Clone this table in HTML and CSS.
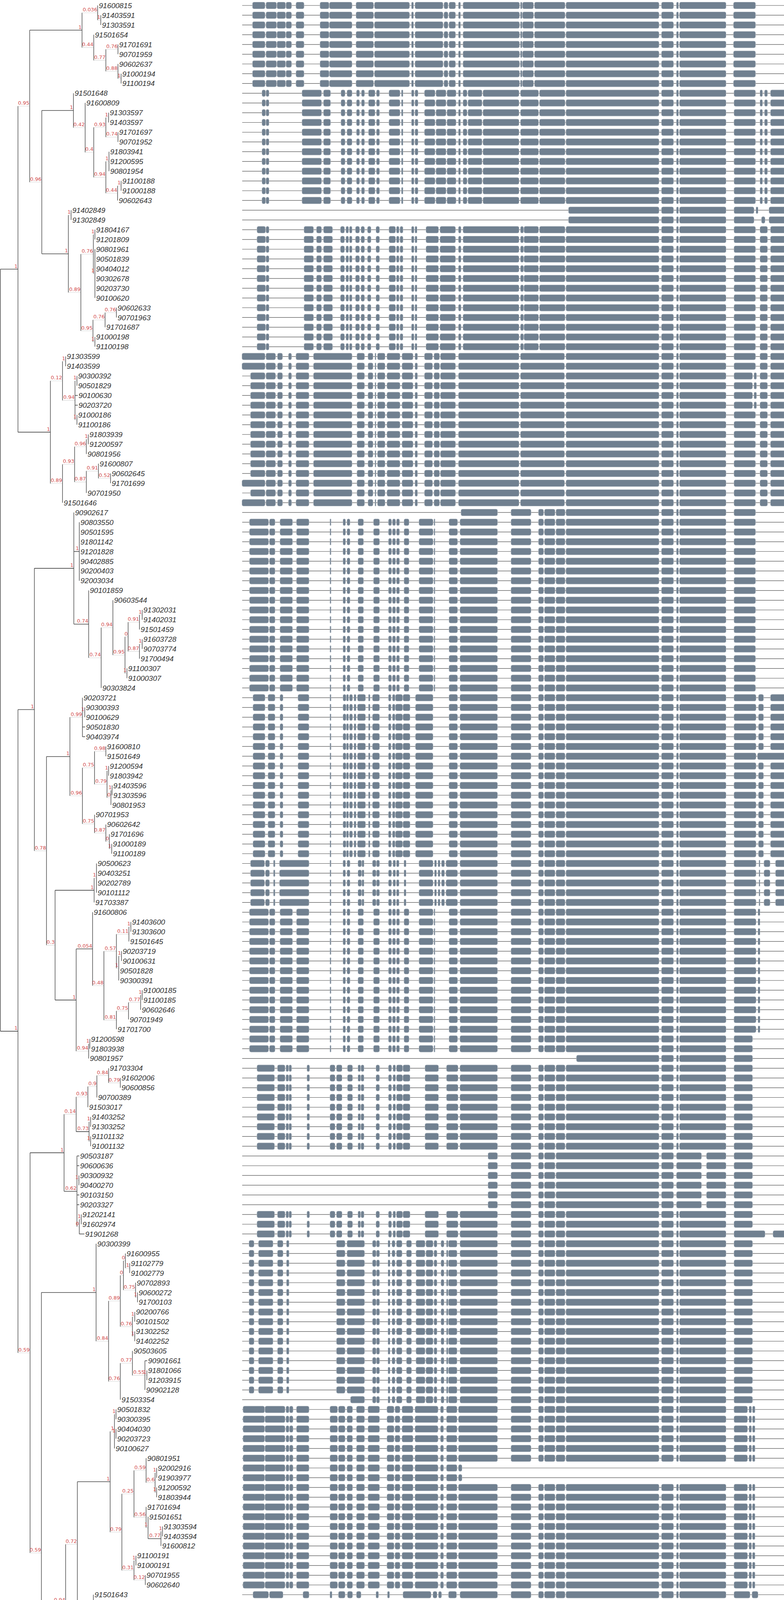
FILE: index.html
```html
<!DOCTYPE html>
<html>
<head>
<meta charset="utf-8">
<title>Gene tree with exon structures</title>
<link rel="stylesheet" href="styles.css">
</head>
<body>
<div class="figure" id="figure"></div>
<script src="script.js"></script>
</body>
</html>
```

FILE: styles.css
```css
html, body {
  margin: 0;
  padding: 0;
  background: #ffffff;
}
.figure {
  width: 2007px;
  height: 7583px;
  overflow: hidden;
  background: #ffffff;
}
.figure svg {
  display: block;
}
.vt {
  stroke: #333333;
  stroke-width: 1.3;
}
.hz {
  stroke: #454545;
  stroke-width: 1.6;
}
.dot {
  stroke: #9c9c9c;
  stroke-width: 1.1;
  stroke-dasharray: 1.2 1.8;
}
.leaf {
  font-family: "Liberation Sans", Arial, sans-serif;
  font-style: italic;
  font-size: 19px;
  fill: #333333;
}
.sup {
  font-family: "DejaVu Sans", sans-serif;
  font-size: 13px;
  fill: #d24c4c;
}
.intron {
  stroke: #505050;
  stroke-width: 1.2;
}
.exon {
  fill: #708090;
  stroke: #aab3bc;
  stroke-width: 1;
}
.scale-line {
  stroke: #222222;
  stroke-width: 1.5;
}
.scale-label {
  font-family: "DejaVu Sans", sans-serif;
  font-size: 16px;
  fill: #222222;
}
```

FILE: script.js
```javascript
(function () {
  var LABELS = ("91600815 91403591 91303591 91501654 91701691 90701959 90602637 91000194 91100194 91501648 " +
    "91600809 91303597 91403597 91701697 90701952 91803941 91200595 90801954 91100188 91000188 " +
    "90602643 91402849 91302849 91804167 91201809 90801961 90501839 90404012 90302678 90203730 " +
    "90100620 90602633 90701963 91701687 91000198 91100198 91303599 91403599 90300392 90501829 " +
    "90100630 90203720 91000186 91100186 91803939 91200597 90801956 91600807 90602645 91701699 " +
    "90701950 91501646 90902617 90803550 90501595 91801142 91201828 90402885 90200403 92003034 " +
    "90101859 90603544 91302031 91402031 91501459 91603728 90703774 91700494 91100307 91000307 " +
    "90303824 90203721 90300393 90100629 90501830 90403974 91600810 91501649 91200594 91803942 " +
    "91403596 91303596 90801953 90701953 90602642 91701696 91000189 91100189 90500623 90403251 " +
    "90202789 90101112 91703387 91600806 91403600 91303600 91501645 90203719 90100631 90501828 " +
    "90300391 91000185 91100185 90602646 90701949 91701700 91200598 91803938 90801957 91703304 " +
    "91602006 90600856 90700389 91503017 91403252 91303252 91101132 91001132 90503187 90600636 " +
    "90300932 90400270 90103150 90203327 91202141 91602974 91901268 90300399 91600955 91102779 " +
    "91002779 90702893 90600272 91700103 90200766 90101502 91302252 91402252 90503605 90901661 " +
    "91801066 91203915 90902128 91503354 90501832 90300395 90404030 90203723 90100627 90801951 " +
    "92002916 91903977 91200592 91803944 91701694 91501651 91303594 91403594 91600812 91100191 " +
    "91000191 90701955 90602640 91501643 91803936 91200600 90902693 90801949 91000183 91100183 " +
    "91600804 90701947 90602648 91701702 91303429 91403429 91501873 91003169 91103169 91800472 " +
    "90802860 91203011 90901852 91901423 90502051 90201098 90103665 90402434 90301205 92000647 " +
    "91901422 90901853 90602106 90702224 91701509 91602746 90800013 90700372 90702771 90701954 " +
    "91600811 91303595 91403595 91701695 91000190 91100190 90602641 90203722 90100628 90501831 " +
    "90300394 91501650 91200593 91803943 90801952 90102578 90403435 90202106 90300054 90502650 " +
    "90800506 91204000 91800623 91702745 90601418 90700953 91602995 91102901 91002901 91502474 " +
    "91400375 91300375 90300396 90501833 90203724 90100626 91701693 90801960 91200591 91803945 " +
    "90902750 92003902 90602639 90701956 91501652 91600813 91403593 91303593 91000192 91100192 " +
    "91100193 91000193 90602638 91701692 90701957 91303592 91403592 91600814 91501653 90801959 " +
    "91200590 90902751 91803946 90404007 90501834 90203725 90100625 90300397 91703355 90400422 " +
    "90203266 90103094 90902272 91901736 92004146 91202832 91802864 90903590 90700369 90600608 " +
    "91700328 90703931 91603879 90600793 90600142 90702770 91002922 91102922 91303335 91403335 " +
    "91500036 91803843 91202718 91701862 90300575 90500052 90104256 90402933 90701789 90602810 " +
    "91601140").split(" ");

  var ROW0 = 14, ROWH = 24.96;
  function rowY(k) { return ROW0 + k * ROWH; }

  var N210 = "((0,(1,2)1@258)0.036@250,(3,((4,5)0.76@302,(6,(7,8)1@310)0.88@302)0.77@271)0.44@240)1@210";
  var N188 = "(9,(10,(((11,12)1@278,(13,14)0.74@302)0.93@271,((15-17)1@279,((18,19)1@310,20)0.44@301)0.94@271)0.4@240)0.42@218)1@188";
  var N175 = "((21,22)1@182,(((23,24)1@243,(25-30)1@243)0.76@239,(((31,32)0.76@298,33)0.76@269,(34,35)1@243)0.95@238)0.89@207)1@175";
  var N096 = "(" + N188 + "," + N175 + ")0.96@107";
  var P095 = "(" + N210 + "," + N096 + ")0.95@76";
  var N012 = "((36,37)1@168,((38,39)1@197,40>201,41>201,(42,43)1@197)0.94@192)0.12@160";
  var N089 = "((((44,45)1@226,46)0.96@221,((47,(48,49)0.52@283)0.91@252,50)0.87@221)0.93@191,51)0.89@160";
  var N129 = "(" + N012 + "," + N089 + ")1@129";
  var R1 = "(" + P095 + "," + N129 + ")1@46";

  var N189 = "(52,(53-59)1@203,(60,((61,((((62,63)1@364,64)0.91@357,((65,66)1@364,67)0.87@357)0@328,(68,69)1@325)0.95@320)0.94@289,70)0.74@259)0.74@227)1@189";
  var N179 = "((71,(72,73)1@217,74>220,75>220)0.99@211,(((76,77)0.98@271,((78,79)1@278,((80,81)1@287,82)0@284)0.79@274)0.75@242,(83,(84,(85,(86,87)1@286)0@280)0.87@271)0.75@242)0.96@211)1@179";
  var N195 = "((93,((((94,95)1@335,96)0.11@330,((97,98)1@311,99,100)1@304)0.57@298,((((101,102)1@364,103)0.77@360,104)0.75@329,105)0.81@298)0.48@266)0.054@237,((106,107)1@230,108)0.94@227)1@195";
  var N030 = "(((88-91)1@247,92)1@241," + N195 + ")0.3@141";
  var N078 = "(" + N179 + "," + N030 + ")0.78@119";
  var N088 = "(" + N189 + "," + N078 + ")1@88";

  var N014 = "((((109,(110,111)0.79@308)0.84@278,112)0.9@248,113)0.93@225,((114,115)1@232,(116,117)1@232)0.73@228)0.14@195";
  var N062 = "(118>205,119>205,(120,121)1@202,122>205,123>205,((124,125)1@208,126>218)0@203)0.62@197";
  var N164 = "(" + N014 + "," + N062 + ")1@164";
  var N246 = "(127,((((128,(129,130)1@332)0@321,(131,(132,133)1@352)0.75@347)0@316,((134,135)1@345,(136,137)1@345)0.76@339)0.89@308,((138,(139>379,(140,141)1@376,142)0.55@371)0.77@339,143)0.76@308)0.84@278)1@246";
  var N079 = "(((149,((150,151)1@401,(152,153)1@401)0.6@397)0.59@374,(154,(155,((156,157)1@416,158)0.77@412)1@379)0.56@374)0.25@343,((159,160)1@348,(161,162)0.12@372)0.31@343)0.79@312";
  var N1_282 = "(((144,145)1@297,(146,147)1@297,148)1@293," + N079 + ")1@282";
  var N1_239 = "(163,(164,(165,166)1@254,167)1@250)1@239";
  var N072 = "(" + N1_282 + "," + N1_239 + ")0.72@198";
  var N1_221 = "((168,169)1@226,(170,((171,172)0.85@291,173)0@260)0.73@252)1@221";
  var N094b = "(" + N072 + "," + N1_221 + ")0.94@168";
  var N074 = "((174,175)1@320,(176,(177,178)1@350)0.73@346)0.74@315";
  var N082 = "((((179>371,(180,181)1@368,((182,183)1@407,184,185,(186,187)1@407,188)0.086@404)0.92@362,(189,(190,191)1@374,(192,193)1@374)0.62@362)0@330,194)0@320,195)0.82@315";
  var N1_283 = "(" + N074 + "," + N082 + ")1@283";

  var N074b = "(((199,200>503,(201,202)1@500)0.94@495,(203,((204,205)1@530,206)0.86@525)0.98@495)0.62@465,((207-210)1@470,211>475)0.78@465)0.74@435";
  var N099b = "((212,213)0.88@465,214)0.99@435";
  var N1_404 = "(" + N074b + "," + N099b + ")1@404";
  var N077 = "((223,(224,(225,226)0@525)0.88@518)0.77@488,((227,228)1@494,(229,(230,231)1@525)0.79@518)0.89@488)0.77@458";
  var N07 = "((218,(219,220)1@463,221>467,222>467)0.96@459," + N077 + ")0.7@429";
  var N1_406 = "((215,(216,217)1@440)0.73@435," + N07 + ")1@406";
  var N094c = "(" + N1_404 + "," + N1_406 + ")0.94@365";
  var N08 = "((236,(237>456,((238,239)1@490,240>494,241)0.85@485)1@450)0.049@445,((242,(243,(244,(245,(246,247)1@520)0.74@515)1@480)0.87@474)0.99@443,(248,249)1@418)1@410)0.8@407";
  var N1_383 = "(((232,233)1@420,(234,235)0.87@443)0.95@414," + N08 + ")1@383";
  var N082b = "((250,251)1@413,((252>495,253)0.86@470,(254,((255,256)1@505,257>509,258)0.92@499)0.74@469)0.74@438)0.82@408";
  var N077b = "(259>419,(260,261)1@416,262,(263,(264-267)1@445)0.99@438)0.77@408";
  var N1_378 = "(" + N082b + "," + N077b + ")1@378";
  var N1_351 = "(" + N1_383 + "," + N1_378 + ")1@351";
  var N03 = "(" + N094c + "," + N1_351 + ")0.3@334";
  var N1_411 = "(268>413,(269-271)1@416)1@411";
  var N076 = "(" + N03 + "," + N1_411 + ")0.76@312";
  var N087 = "(198>316," + N076 + ")0.87@282";
  var N09 = "(" + N087 + ",272>289)0.9@251";
  var N1_244 = "(((273-277)1@282,278>302)0.99@275,(279,((280,(281,282)0.26@367)0.88@336,(283>322,((284>374,285>379)1@362,(((286,287)1@396,((288,289)1@430,290)0.61@422)0.93@392,((291,292)1@396,((293,(294,295)1@437)0.91@431,(((296>512,297)0.012@500,298)0.74@461,(299,300)0.78@462)0.43@431)0@398)0.69@392)1@362)0.92@346)1@315)0.83@306)0.99@275)1@244";
  var N099 = "(" + N09 + "," + N1_244 + ")0.99@228";
  var N085 = "((196>250,197>274)1@236," + N099 + ")0.85@198";
  var N054 = "(" + N1_283 + "," + N085 + ")0.54@166";
  var N091 = "(" + N094b + "," + N054 + ")0.91@137";
  var N0591 = "(" + N246 + "," + N091 + ")0.59@106";
  var N059 = "(" + N164 + "," + N0591 + ")0.59@77";
  var R2 = "(" + N088 + "," + N059 + ")1@46";

  var TREE = "(" + R1 + "," + R2 + ")@0";

  function parseTree(s) {
    var i = 0;
    function num() {
      var t = "";
      while (i < s.length && /[0-9.]/.test(s[i])) t += s[i++];
      return parseFloat(t);
    }
    function item() {
      if (s[i] === "(") {
        i++;
        var ch = [];
        while (true) {
          var got = item();
          for (var g = 0; g < got.length; g++) ch.push(got[g]);
          if (s[i] === ",") { i++; continue; }
          if (s[i] === ")") { i++; break; }
          throw new Error("bad tree at " + i);
        }
        var sup = "";
        while (s[i] !== "@") sup += s[i++];
        i++;
        var x = num();
        return [{ ch: ch, sup: sup, x: x }];
      }
      var a = num(), b = a, lx = null;
      if (s[i] === "-") { i++; b = num(); }
      if (s[i] === ">") { i++; lx = num(); }
      var out = [];
      for (var k = a; k <= b; k++) out.push({ leaf: k, lx: lx });
      return out;
    }
    return item()[0];
  }

  function layout(n) {
    if (n.leaf !== undefined) { n.y = rowY(n.leaf); return; }
    for (var c = 0; c < n.ch.length; c++) layout(n.ch[c]);
    n.y = (n.ch[0].y + n.ch[n.ch.length - 1].y) / 2;
  }

  var canvas = document.createElement("canvas");
  var ctx = canvas.getContext("2d");
  ctx.font = '13px "DejaVu Sans", sans-serif';
  function supW(t) { return ctx.measureText(t).width; }

  var lines = [], texts = [];
  function f(v) { return Math.round(v * 100) / 100; }
  function line(cls, x1, y1, x2, y2) {
    lines.push('<line class="' + cls + '" x1="' + f(x1) + '" y1="' + f(y1) + '" x2="' + f(x2) + '" y2="' + f(y2) + '"/>');
  }

  function draw(n) {
    if (n.leaf !== undefined) return;
    var nx = n.x === 0 ? 1 : n.x;
    var first = n.ch[0], last = n.ch[n.ch.length - 1];
    line("vt", nx, first.y, nx, last.y);
    for (var c = 0; c < n.ch.length; c++) {
      var ch = n.ch[c];
      if (ch.leaf !== undefined) {
        var lx = ch.lx !== null ? ch.lx : nx + 3;
        if (lx - nx > 6) line("hz", nx, ch.y, lx - 2, ch.y);
        texts.push('<text class="leaf" x="' + f(lx) + '" y="' + f(ch.y + 6.8) + '">' + LABELS[ch.leaf] + '</text>');
      } else {
        var L = ch.x - nx;
        var w = ch.sup ? supW(ch.sup) : 0;
        if (L > w + 4) {
          line("hz", nx, ch.y, ch.x, ch.y);
        } else {
          line("dot", nx, ch.y, ch.x, ch.y);
        }
        if (ch.sup) {
          texts.push('<text class="sup" x="' + f(ch.x - 1) + '" y="' + f(ch.y - 3.5) + '" text-anchor="end">' + ch.sup + '</text>');
        }
        draw(ch);
      }
    }
  }

  var root = parseTree(TREE.replace(/\s+/g, ""));
  layout(root);
  draw(root);

  var SC = 2007 / 1568;
  var M = "1132-1318 1323-1347 1353-1357 1359-1452";
  var EM = "920-995 1022-1062 1077-1087 1089-1110 1112-1130";
  var PAT = {
    A: "505-530 532-553 554-571 572-583 592-608 640-658 659-704 712-747 749-819 823-827 830-886 888-896 898-911 917-921 926-1039 1041-1044 1045-1067 1069-1130 " + M + " 1467-1511",
    B: "524-531 532-538 604-643 647-661 682-690 694-704 713-719 723-729 737-750 753-759 778-800 803-806 823-828 830-836 849-870 872-892 894-912 917-921 926-934 936-964 966-1038 1041-1077 1079-1130 " + M + " 1468-1511 1520-1525 1529-1535 1541-1575",
    C: "514-531 532-538 608-627 633-643 647-665 681-689 692-697 699-704 711-719 722-729 735-742 752-759 778-791 793-798 800-806 823-828 830-834 852-877 880-911 917-922 926-1038 1041-1047 1048-1077 1079-1130 " + M + " 1468-1511 1520-1535 1541-1575",
    D1: "484-530 532-551 555-565 577-583 592-618 627-704 714-729 736-746 750-752 755-770 774-800 804-826 830-835 849-865 868-879 881-911 917-1038 1041-1129 " + M + " 1468-1511 1520-1535 1541-1575",
    D2: "501-530 532-551 555-565 577-583 592-618 627-704 714-729 736-746 750-752 755-770 774-800 804-826 830-835 849-865 868-879 881-911 917-1038 1041-1129 " + M + " 1468-1511 1520-1535 1541-1575",
    E: "499-537 539-550 560-585 593-618 660-662 686-691 694-700 716-727 747-759 777-783 785-791 793-799 808-818 838-866 868-870 898-915 " + EM + " " + M + " 1468-1511",
    F: "506-530 536-550 560-566 596-618 660-662 686-692 693-697 699-705 708-712 715-731 737-740 745-759 777-782 785-790 791-805 806-820 831-866 898-915 " + EM + " " + M + " 1468-1512 1517-1527 1541-1575",
    G: "501-529 531-539 547-550 559-618 660-662 686-691 694-700 716-723 724-728 745-752 753-759 777-783 786-791 793-798 808-812 838-866 869-873 876-880 883-889 892-915 " + EM + " " + M + " 1468-1512 1518-1520 1528-1540 1551-1575",
    I: "514-549 555-570 572-577 578-583 614-619 660-670 673-684 695-705 716-721 722-728 752-759 777-783 786-791 793-805 806-820 850-877 893-916 " + EM + " " + M + " 1468-1505",
    Q: "976-995 1022-1062 1077-1087 1089-1110 1112-1318 1323-1347 1353-1403 1413-1452 1468-1505",
    J: "498-508 517-546 555-566 573-578 673-690 694-729 745-752 753-759 776-780 784-790 793-804 813-823 832-850 852-866 868-874 882-888 893-896 897-914 " + EM + " " + M + " 1468-1505",
    K: "486-529 530-570 572-578 579-586 593-618 660-675 677-690 694-705 713-729 736-759 774-788 790-800 804-826 830-876 881-887 893-914 917-995 1022-1062 1077-1087 1089-1110 1112-1130 " + M + " 1468-1495 1498-1503 1505-1510",
    L: "506-537 539-566 606-618 660-664 677-690 695-705 713-722 752-757 775-779 806-862 866-874 877-883 897-913 " + EM + " " + M + " 1468-1500 1504-1516",
    Mx: "506-540 554-573 576-588 607-613 660-666 667-672 690-700 715-720 721-727 752-757 758-763 777-782 783-789 816-872 894-916 " + EM + " " + M + " 1468-1512 1520-1523",
    N: "506-541 557-570 577-585 607-611 654-669 682-686 694-704 707-730 737-741 752-759 778-787 816-876 900-912 915-995 1022-1062 1077-1087 1089-1110 1112-1130 " + M + " 1468-1497",
    O: "505-540 554-573 575-588 607-613 660-672 689-700 713-720 721-727 752-757 758-763 775-781 782-789 816-872 895-916 " + EM + " " + M + " 1468-1495 1497-1512 1520-1527 1538-1575",
    P: "505-541 545-550 561-569 571-580 601-610 612-619 660-668 672-684 694-701 713-720 721-727 749-759 776-779 800-805 807-820 825-866 869-876 879-887 890-896 898-916 " + EM + " " + M + " 1468-1510 1546-1575",
    S197: "510-541 545-549 560-566 570-578 601-618 660-666 680-686 695-705 713-721 737-740 752-759 777-780 781-790 791-797 800-810 830-864 866-876 893-912 915-995 1022-1062 1077-1087 1089-1110 1112-1130 " + M + " 1468-1530 1545-1575",
    S278: "1166-1190 1194-1318 1323-1347 1353-1357 1359-1452 1468-1512 1522-1533 1538-1575"
  };
  var T_Ob = "1468-1505 1507-1512 1520-1523 1538-1547";
  var T_O2 = "1468-1512 1519-1524 1526-1533 1537-1552 1554-1575";
  var T3 = "1468-1504 1507-1512 1520-1533 1538-1575";

  var ROWS = [
    [0, 8, "A"], [9, 20, "B"],
    [21, 21, "B", { from: 1137, tail: "1468-1508 1512-1516 1538-1575" }],
    [22, 22, "B", { from: 1137, tail: "1468-1508 1523-1530 1538-1575" }],
    [23, 35, "C"], [36, 37, "D1"],
    [38, 41, "D2", { tail: "1468-1505 1508-1513 1520-1535 1541-1575" }],
    [42, 48, "D2"], [49, 49, "D1"], [50, 50, "D2"], [51, 51, "D1"],
    [52, 52, "E", { from: 922 }], [53, 70, "E"],
    [71, 76, "F"], [77, 77, "F", { tail: "1468-1512 1515-1575" }], [78, 87, "F"],
    [88, 92, "G"],
    [93, 105, "E", { tail: "1468-1512 1516-1520" }],
    [106, 107, "E", { tail: "1468-1505" }],
    [108, 108, "E", { from: 1153, tail: "1468-1505" }],
    [109, 117, "I"], [118, 123, "Q"], [124, 125, "I"],
    [126, 126, "I", { tail: "1468-1530 1546-1575" }],
    [127, 142, "J"], [143, 143, "J", { from: 701 }],
    [144, 149, "K"], [150, 151, "K", { to: 924 }], [152, 162, "K"],
    [163, 167, "L"], [168, 173, "Mx"],
    [174, 181, "N"], [182, 183, "N", { to: 1209 }], [184, 188, "N"],
    [189, 189, "N", { from: 820 }], [190, 191, "N", { from: 1198 }], [192, 195, "N"],
    [196, 196, "O", { from: 1030, tail: "1468-1512 1522-1533 1538-1575" }],
    [197, 197, "S197"],
    [198, 198, "O", { from: 1077, tail: "1468-1508 1511-1514 1538-1575" }],
    [199, 210, "O"], [211, 211, "O", { from: 581 }], [212, 212, "O", { from: 850 }],
    [213, 213, "O", { from: 566 }], [214, 214, "O"],
    [215, 231, "O", { tail: T_Ob }],
    [232, 236, "O", { tail: T_O2 }], [237, 237, "O", { from: 575, tail: T_O2 }],
    [238, 240, "O", { tail: T_O2 }], [241, 241, "O", { to: 1119 }],
    [242, 253, "O", { tail: T_O2 }], [254, 254, "O", { to: 1370 }],
    [255, 258, "O", { tail: "1468-1512 1520-1533 1538-1575" }],
    [259, 267, "O", { tail: "1468-1512 1519-1524 1526-1533 1538-1575" }],
    [268, 268, "P", { to: 1264 }], [269, 271, "P"],
    [272, 272, "O", { from: 1220, tail: "1468-1505 1508-1514 1522-1533 1538-1575" }],
    [273, 277, "O", { tail: T3 }], [278, 278, "S278"], [279, 283, "O", { tail: T3 }],
    [284, 284, "O", { from: 555, tail: "1468-1504 1507-1511 1514-1518 1521-1526" }],
    [285, 285, "O", { from: 555, to: 1362 }],
    [286, 295, "O", { tail: T3 }], [296, 296, "O", { to: 1347 }], [297, 300, "O", { tail: T3 }]
  ];

  function parseP(str) {
    return str.trim().split(/\s+/).map(function (t) {
      var p = t.split("-");
      return [parseFloat(p[0]), parseFloat(p[1])];
    });
  }
  function exonsFor(name, opt) {
    opt = opt || {};
    var list = parseP(PAT[name]);
    if (opt.tail) list = list.filter(function (e) { return e[0] < 1460; }).concat(parseP(opt.tail));
    if (opt.from) list = list.filter(function (e) { return e[1] > opt.from; }).map(function (e) { return [Math.max(e[0], opt.from), e[1]]; });
    if (opt.to) list = list.filter(function (e) { return e[0] < opt.to; }).map(function (e) { return [e[0], Math.min(e[1], opt.to)]; });
    return list.map(function (e) { return [e[0] * SC, e[1] * SC]; });
  }

  var genes = [];
  ROWS.forEach(function (r) {
    for (var k = r[0]; k <= r[1]; k++) {
      var y = rowY(k);
      genes.push('<line class="intron" x1="620" y1="' + f(y) + '" x2="2007" y2="' + f(y) + '"/>');
      var ex = exonsFor(r[2], r[3]);
      for (var j = 0; j < ex.length; j++) {
        var x0 = ex[j][0], w = Math.max(1.5, ex[j][1] - ex[j][0]);
        var rx = Math.min(4, w / 2);
        genes.push('<rect class="exon" x="' + f(x0) + '" y="' + f(y - 8.5) + '" width="' + f(w) + '" height="17" rx="' + f(rx) + '"/>');
      }
    }
  });

  var scale = '<line class="scale-line" x1="2" y1="7521" x2="71" y2="7521"/>' +
    '<line class="scale-line" x1="2" y1="7513" x2="2" y2="7529"/>' +
    '<line class="scale-line" x1="71" y1="7513" x2="71" y2="7529"/>' +
    '<text class="scale-label" x="2" y="7544">0.43</text>';

  var svg = '<svg xmlns="http://www.w3.org/2000/svg" width="2007" height="7583" viewBox="0 0 2007 7583">' +
    '<g>' + genes.join("") + '</g>' +
    '<g>' + lines.join("") + '</g>' +
    '<g>' + texts.join("") + '</g>' +
    '<g>' + scale + '</g></svg>';
  document.getElementById("figure").innerHTML = svg;
})();
```
